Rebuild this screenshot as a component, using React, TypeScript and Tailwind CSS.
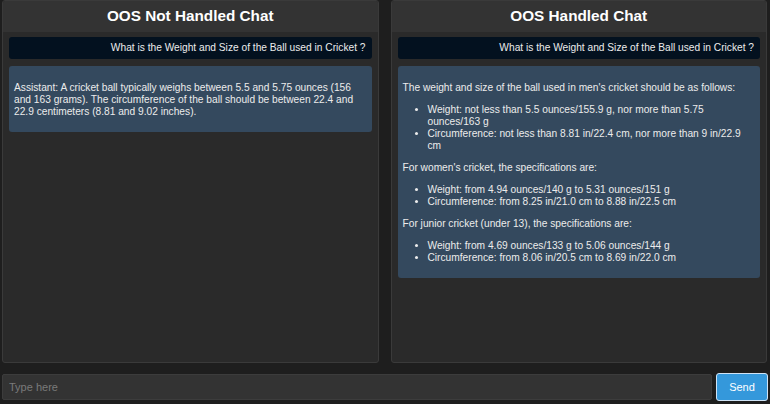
import React from "react";

const bubbleUser =
  "rounded-[3px] bg-[#03111f] px-[6px] py-[5px] text-right text-[10.2px] leading-[12px] text-[#ececec]";
const bubbleBot =
  "rounded-[3px] bg-[#34495e] px-[5px] pt-[6px] pb-[4px] text-[10.2px] leading-[12px] text-[#ececec]";

const question = "What is the Weight and Size of the Ball used in Cricket ?";

function Panel({ title, children }: { title: string; children: React.ReactNode }) {
  return (
    <div className="flex flex-1 flex-col overflow-hidden rounded-[3px] border border-[#3a3a3a] bg-[#2a2a2a]">
      <div className="flex h-[31px] shrink-0 items-center justify-center bg-[#333333]">
        <h2 className="text-[15.3px] font-bold text-white">{title}</h2>
      </div>
      <div className="flex flex-col gap-[7px] px-[6px] pt-[5px]">
        <div className={bubbleUser}>{question}</div>
        {children}
      </div>
    </div>
  );
}

function App() {
  return (
    <div
      className="flex h-[404px] w-[770px] flex-col bg-[#1e1e1e]"
      style={{ fontFamily: '"Liberation Sans", Arial, sans-serif' }}
    >
      <div className="flex h-[363px] gap-[12px] pl-[2px] pr-[3px]">
        {/* not handled */}
        <Panel title="OOS Not Handled Chat">
          <div className={bubbleBot}>
            <p className="my-[10px]">
              Assistant: A cricket ball typically weighs between 5.5 and 5.75 ounces (156
              and 163 grams). The circumference of the ball should be between 22.4 and
              22.9 centimeters (8.81 and 9.02 inches).
            </p>
          </div>
        </Panel>
        {/* handled */}
        <Panel title="OOS Handled Chat">
          <div className={bubbleBot}>
            <p className="my-[10px]">
              The weight and size of the ball used in men's cricket should be as follows:
            </p>
            <ul className="my-[10px] list-disc pl-[25px]">
              <li>Weight: not less than 5.5 ounces/155.9 g, nor more than 5.75 ounces/163 g</li>
              <li>Circumference: not less than 8.81 in/22.4 cm, nor more than 9 in/22.9 cm</li>
            </ul>
            <p className="my-[10px]">For women's cricket, the specifications are:</p>
            <ul className="my-[10px] list-disc pl-[25px]">
              <li>Weight: from 4.94 ounces/140 g to 5.31 ounces/151 g</li>
              <li>Circumference: from 8.25 in/21.0 cm to 8.88 in/22.5 cm</li>
            </ul>
            <p className="my-[10px]">For junior cricket (under 13), the specifications are:</p>
            <ul className="my-[10px] list-disc pl-[25px]">
              <li>Weight: from 4.69 ounces/133 g to 5.06 ounces/144 g</li>
              <li>Circumference: from 8.06 in/20.5 cm to 8.69 in/22.0 cm</li>
            </ul>
          </div>
        </Panel>
      </div>
      <div className="mt-[11px] flex gap-[4px] pl-[2px] pr-[2px]">
        <input
          type="text"
          placeholder="Type here"
          className="h-[26px] flex-1 rounded-[2px] border border-[#3c3c3c] bg-[#333333] px-[6px] text-[11px] text-[#ddd] outline-none placeholder:text-[#7a7a7a]"
        />
        <button className="h-[28px] w-[52px] -mt-[1px] rounded-[3px] border border-[#cfe3f5] bg-[#3498db] text-[11px] text-white">
          Send
        </button>
      </div>
    </div>
  );
}

export default App;
